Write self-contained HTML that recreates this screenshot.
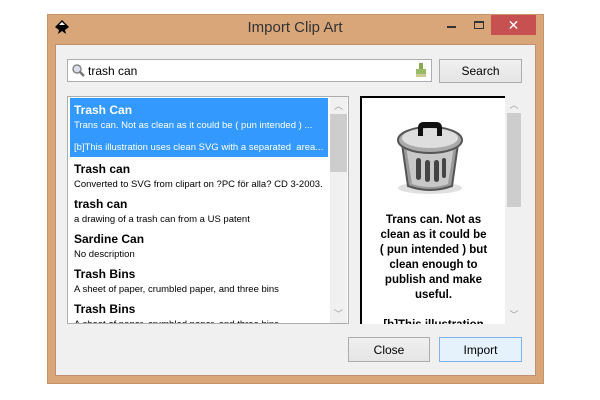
<!DOCTYPE html>
<html><head><style>
*{margin:0;padding:0;box-sizing:border-box}
body{width:600px;height:400px;background:#fff;position:relative;font-family:"Liberation Sans","DejaVu Sans",sans-serif;overflow:hidden}
.a{position:absolute}
.win{left:47px;top:14px;width:497px;height:370px;background:#d9a67a;border:1px solid #c7936a}
.client{left:55px;top:44px;width:481px;height:332px;background:#f0f0f0;border:1px solid #c09070}
.btn{background:linear-gradient(#f0f0f0,#e5e5e5);border:1px solid #acacac;font-size:12px;text-align:center;line-height:23px;color:#000}
.item{position:absolute;left:2px;width:258px;height:34px;padding-left:4px}
.item b{display:block;font-size:12px;line-height:16px;padding-top:4px}
.item span{display:block;font-size:9.5px;line-height:16px;white-space:nowrap;overflow:hidden}
.sb{background:#f0f0f0}
.arr{position:absolute;font-size:9px;color:#999;width:100%;text-align:center}
</style></head><body>
<div class="a win"></div>
<svg class="a" style="left:54px;top:19px" width="16" height="18" viewBox="0 0 16 18">
<path d="M8 1 L15 8 L11 11 L12 15 L8 12 L4 15 L5 11 L1 8 Z" fill="#000"/>
<path d="M8 3 L11 6 L5 6 Z" fill="#fff"/>
</svg>
<div class="a" style="left:0;width:590px;top:19px;text-align:center;font-size:15px;color:#333">Import Clip Art</div>
<div class="a" style="left:447px;top:26px;width:9px;height:2px;background:#333"></div>
<div class="a" style="left:474px;top:21px;width:10px;height:8px;border:1px solid #333;border-top-width:2px"></div>
<div class="a" style="left:491px;top:15px;width:45px;height:20px;background:#c75050;color:#fff;text-align:center;font-size:14px;line-height:20px;font-weight:bold">✕</div>
<div class="a client"></div>
<div class="a" style="left:67px;top:59px;width:365px;height:23px;background:#fff;border:1px solid #abadb3"></div>
<svg class="a" style="left:71px;top:63px" width="14" height="14"><circle cx="6" cy="6" r="4" fill="#dde" stroke="#888" stroke-width="1.5"/><line x1="9" y1="9" x2="13" y2="13" stroke="#777" stroke-width="2.5"/></svg>
<div class="a" style="left:88px;top:64px;font-size:12px">trash can</div>
<svg class="a" style="left:415px;top:62px" width="12" height="16"><rect x="4" y="1" width="4" height="7" fill="#8a5"/><rect x="1" y="7" width="10" height="5" fill="#9b6"/><rect x="1" y="12" width="10" height="3" fill="#cc9"/></svg>
<div class="a btn" style="left:439px;top:59px;width:83px;height:24px">Search</div>

<div class="a" style="left:67px;top:96px;width:282px;height:228px;background:#fff;border:1px solid #adadad;overflow:hidden">
 <div class="item" style="top:1px;height:59px;background:#3399ff;color:#fff"><b>Trash Can</b><span>Trans can. Not as clean as it could be ( pun intended ) ...</span><span style="margin-top:6px">[b]This illustration uses clean SVG with a separated &nbsp;area...</span></div>
 <div class="item" style="top:60px"><b>Trash can</b><span>Converted to SVG from clipart on ?PC för alla? CD 3-2003.</span></div>
 <div class="item" style="top:95px"><b>trash can</b><span>a drawing of a trash can from a US patent</span></div>
 <div class="item" style="top:130px"><b>Sardine Can</b><span>No description</span></div>
 <div class="item" style="top:165px"><b>Trash Bins</b><span>A sheet of paper, crumbled paper, and three bins</span></div>
 <div class="item" style="top:200px"><b>Trash Bins</b><span>A sheet of paper, crumbled paper, and three bins</span></div>
 <div class="a sb" style="left:262px;top:0;width:17px;height:226px"><div class="arr" style="top:2px">︿</div><div class="a" style="left:0;top:17px;width:17px;height:58px;background:#cdcdcd"></div><div class="arr" style="top:210px">﹀</div></div>
</div>

<div class="a" style="left:360px;top:96px;width:145px;height:228px;background:#fff;border-left:2px solid #000;border-top:2px solid #000;overflow:hidden">
<svg class="a" style="left:30px;top:12px" width="76" height="86" viewBox="0 0 76 86">
<ellipse cx="38" cy="78" rx="32" ry="6" fill="#ccc" opacity=".6"/>
<path d="M10 34 L16 76 Q38 84 60 76 L66 34 Z" fill="#9a9a9a" stroke="#555" stroke-width="2"/>
<path d="M14 36 L20 74 Q38 80 56 74 L62 36 Z" fill="#c8c8c8"/>
<rect x="24" y="48" width="5" height="22" rx="2.5" fill="#444"/><rect x="33" y="50" width="5" height="22" rx="2.5" fill="#444"/><rect x="42" y="50" width="5" height="22" rx="2.5" fill="#444"/><rect x="50" y="48" width="4" height="20" rx="2" fill="#444"/>
<ellipse cx="38" cy="30" rx="32" ry="13" fill="#aaa" stroke="#555" stroke-width="2"/>
<ellipse cx="38" cy="28" rx="28" ry="10" fill="#dedede"/>
<path d="M26 26 L26 18 Q26 12 32 12 L44 12 Q50 12 50 18 L50 26 L45 26 L45 18 L31 18 L31 26 Z" fill="#111"/>
</svg>
<div class="a" style="left:0;top:115px;width:143px;text-align:center;font-size:11.5px;font-weight:bold;line-height:15px;white-space:nowrap">Trans can. Not as<br>clean as it could be<br>( pun intended ) but<br>clean enough to<br>publish and make<br>useful.<br><br>[b]This illustration</div>
</div>
<div class="a sb" style="left:506px;top:96px;width:16px;height:228px"><div class="arr" style="top:2px">︿</div><div class="a" style="left:1px;top:17px;width:14px;height:94px;background:#cdcdcd"></div><div class="arr" style="top:212px">﹀</div></div>

<div class="a btn" style="left:348px;top:337px;width:82px;height:25px;line-height:24px">Close</div>
<div class="a btn" style="left:439px;top:337px;width:83px;height:25px;line-height:24px;background:#e5f1fb;border-color:#7eb4ea">Import</div>
</body></html>
